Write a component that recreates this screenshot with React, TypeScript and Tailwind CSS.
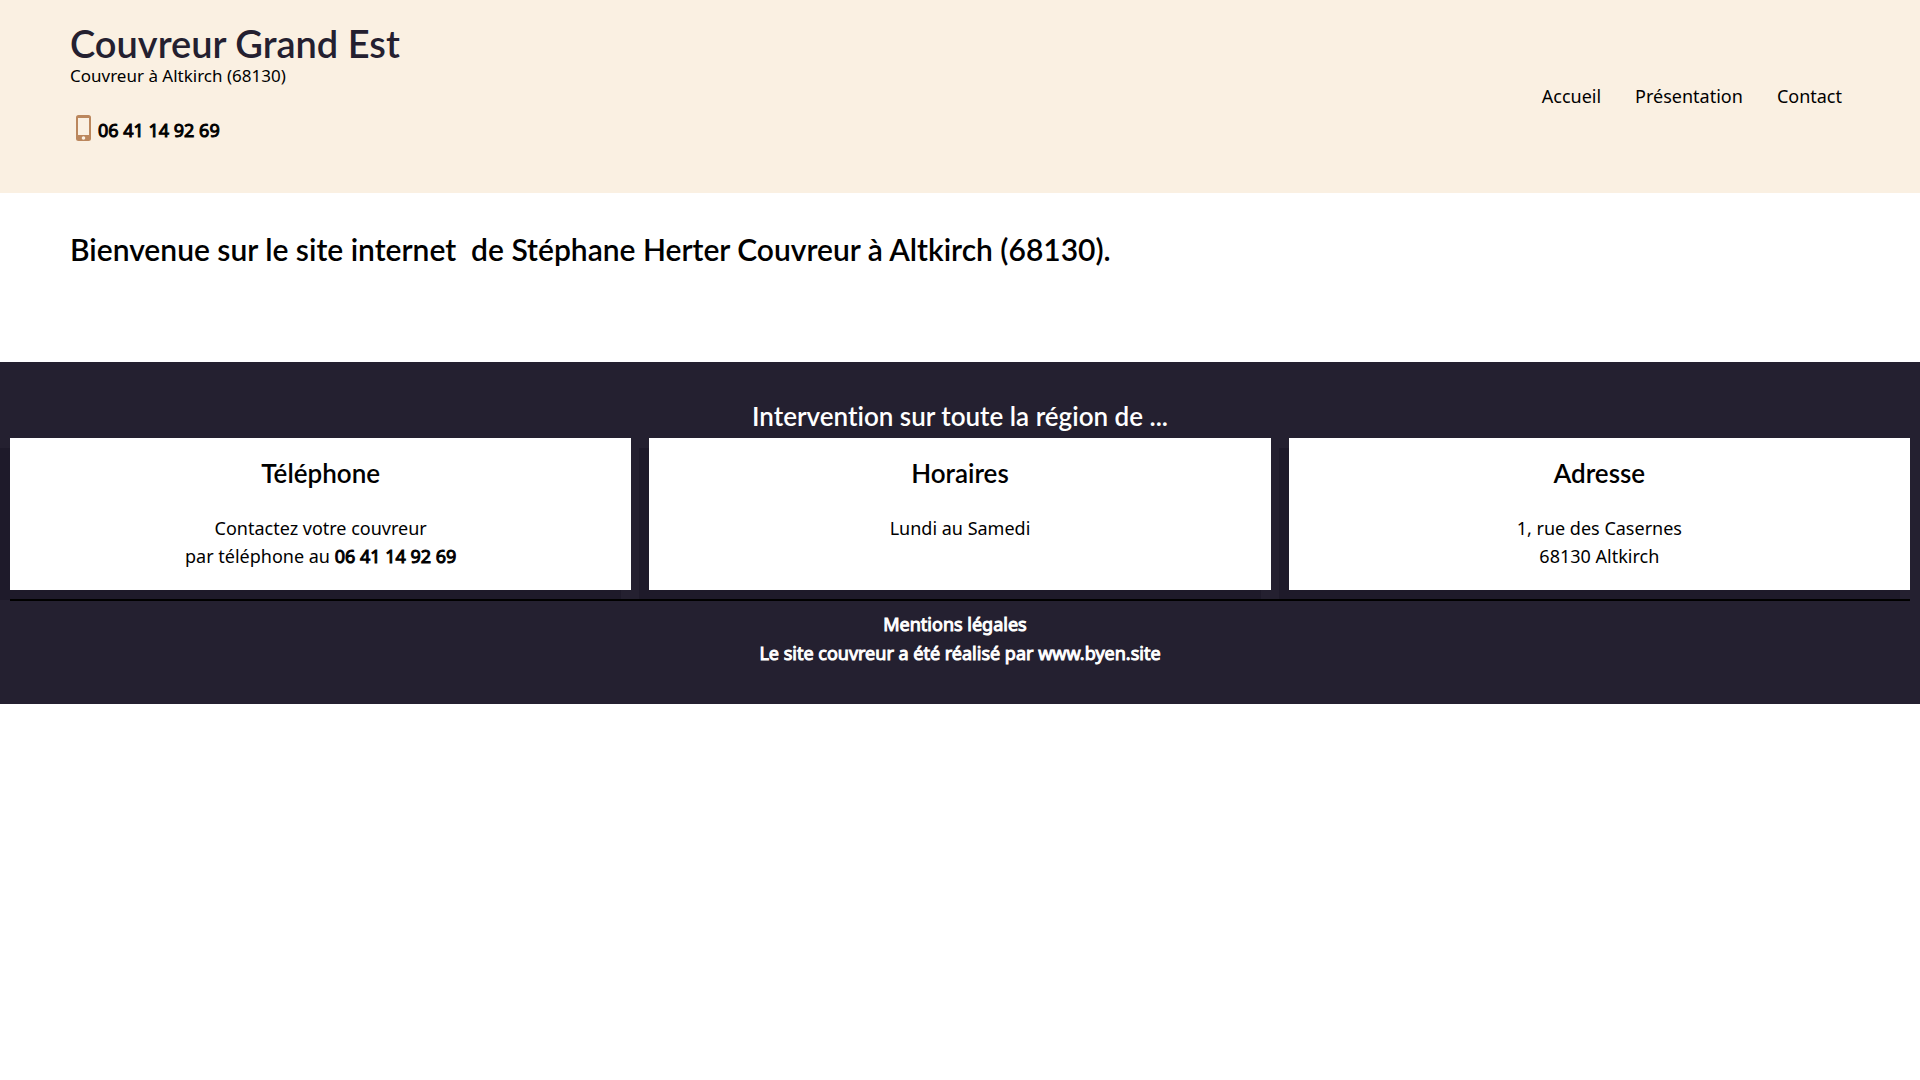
import type { ReactNode } from "react";

const navLinks = ["Accueil", "Présentation", "Contact"];

const heading = "font-['Lato',sans-serif] font-semibold [font-variant-ligatures:none]";
const strong = "font-normal [-webkit-text-stroke:1px_currentColor]";

function PhoneIcon() {
  return (
    <svg className="h-7 w-7" viewBox="0 0 28 28" aria-hidden="true">
      <path
        fill="#bb875d"
        fillRule="evenodd"
        d="M8.5 1h10a2.5 2.5 0 0 1 2.5 2.500v21a2.500 2.500 0 0 1-2.500 2.500h-10a2.500 2.500 0 0 1-2.500-2.500v-21a2.500 2.500 0 0 1 2.500-2.500zM8 4v17h11v-17zM13.500 22.200a1.800 1.800 0 1 0 0 3.600a1.800 1.800 0 1 0 0-3.600z"
      />
    </svg>
  );
}

function InfoCard({ title, children }: { title: string; children: ReactNode }) {
  return (
    <section className="bg-white px-5 py-5 text-center text-black shadow-[-10px_10px_0_#1e1a2a]">
      <h3 className={`${heading} text-[26px] leading-[30px]`}>{title}</h3>
      <p className="mt-[26px] text-lg leading-7">{children}</p>
    </section>
  );
}

export default function App() {
  return (
    <div className="min-h-screen bg-white font-['Noto_Sans',sans-serif] text-lg leading-7 text-black">
      <header className="flex items-center justify-between bg-[#faf0e2] px-[70px]">
        <div className="pt-[22px] pb-[47px]">
          <h1 className={`${heading} text-[38px] leading-[42px] text-[#242030]`}>
            <a href="#accueil">Couvreur Grand Est</a>
          </h1>
          <p className="text-[17px] leading-6">Couvreur à Altkirch (68130)</p>
          <a href="tel:0641149269" className="mt-[26px] flex">
            <PhoneIcon />
            <span className={`${strong} leading-8`}>06 41 14 92 69</span>
          </a>
        </div>
        <nav className="flex gap-[34px] pr-2 pb-0.5">
          {navLinks.map((label) => (
            <a key={label} href={`#${label.toLowerCase()}`}>
              {label}
            </a>
          ))}
        </nav>
      </header>

      <main className="px-[70px] pt-9 pb-[93px]">
        <h2 className={`${heading} text-[30px] leading-10`}>
          {"Bienvenue sur le site internet \u00a0de Stéphane Herter Couvreur à Altkirch (68130)."}
        </h2>
      </main>

      <footer className="bg-[#242030] px-2.5 pt-9 pb-9 text-white">
        <h2 className={`${heading} pb-1 text-center text-[26px] leading-9`}>
          Intervention sur toute la région de ...
        </h2>
        <div className="grid grid-cols-3 gap-[18px]">
          <InfoCard title="Téléphone">
            Contactez votre couvreur
            <br />
            par téléphone au <strong className={strong}>06 41 14 92 69</strong>
          </InfoCard>
          <InfoCard title="Horaires">Lundi au Samedi</InfoCard>
          <InfoCard title="Adresse">
            1, rue des Casernes
            <br />
            68130 Altkirch
          </InfoCard>
        </div>
        <hr className="relative mt-[9px] border-t-2 border-black" />
        <div className={`${strong} mt-[9px] text-center leading-[29px]`}>
          <p className="pr-2.5">
            <a href="#mentions">Mentions légales</a>
          </p>
          <p>
            Le site <a href="#couvreur">couvreur</a> a été réalisé par <a href="#byen">www.byen.site</a>
          </p>
        </div>
      </footer>
    </div>
  );
}
